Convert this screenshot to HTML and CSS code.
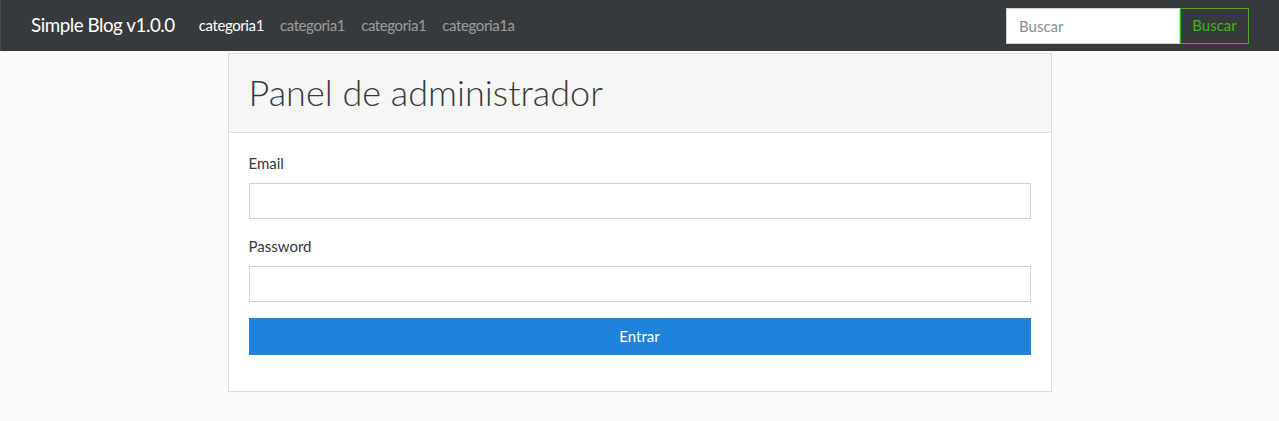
FILE: index.html
```html
<!DOCTYPE html>
<html lang="es">
<head>
<meta charset="utf-8">
<title>Simple Blog</title>
<link rel="stylesheet" href="styles.css">
</head>
<body>
<nav class="navbar">
  <a class="brand" href="#">Simple Blog v1.0.0</a>
  <ul class="nav">
    <li><a class="nav-link active" href="#">categoria1</a></li>
    <li><a class="nav-link" href="#">categoria1</a></li>
    <li><a class="nav-link" href="#">categoria1</a></li>
    <li><a class="nav-link" href="#">categoria1a</a></li>
  </ul>
  <form class="search">
    <input class="search-input" type="text" placeholder="Buscar">
    <button class="search-btn" type="button">Buscar</button>
  </form>
</nav>
<main class="main">
  <section class="card">
    <header class="card-header">
      <h1 class="card-title">Panel de administrador</h1>
    </header>
    <div class="card-body">
      <div class="field">
        <label class="label" for="email">Email</label>
        <input class="input" id="email" type="email">
      </div>
      <div class="field">
        <label class="label" for="pw">Password</label>
        <input class="input" id="pw" type="password">
      </div>
      <button class="btn-primary" type="button">Entrar</button>
    </div>
  </section>
</main>
</body>
</html>
```
FILE: styles.css
```css
* { box-sizing: border-box; }
html, body { margin: 0; padding: 0; }
body {
  background: #f8f9fa;
  color: #373a3c;
  font-family: "Source Sans Pro", Lato, "Liberation Sans", sans-serif;
  font-size: 15px;
  line-height: 1.5;
  height: 421px;
  overflow: hidden;
}
.navbar {
  height: 51px;
  background: #373a3c;
  display: flex;
  align-items: center;
  padding: 0 30px 0 30px;
  border-left: 1px solid #4a4d4f;
}
.brand {
  color: #fff;
  text-decoration: none;
  font-size: 18.75px;
  letter-spacing: -0.45px;
  margin-right: 16px;
}
.nav {
  list-style: none;
  margin: 0;
  padding: 0;
  display: flex;
  flex: 1;
}
.nav-link {
  display: block;
  padding: 8px 8px;
  color: rgba(255,255,255,0.5);
  text-decoration: none;
  font-size: 15px;
  letter-spacing: -0.4px;
}
.nav-link.active { color: #fff; }
.search { display: flex; }
.search-input {
  width: 174px;
  height: 36px;
  border: 1px solid #ced4da;
  background: #fff;
  padding: 6px 12px;
  font: inherit;
  font-size: 15px;
  margin: 0;
  outline: none;
}
.search-input::placeholder { color: #868e96; }
.search-btn {
  height: 36px;
  width: 69px;
  border: 1px solid #3fb618;
  background: transparent;
  color: #3fb618;
  font: inherit;
  font-size: 15px;
  margin: 0;
  padding: 0;
}
.main {
  display: flex;
  justify-content: center;
  padding-top: 2px;
}
.card {
  width: 824px;
  background: #fff;
  border: 1px solid #dcdcdd;
}
.card-header {
  background: #f6f6f6;
  border-bottom: 1px solid #dcdcdd;
  height: 79px;
  padding: 0 20px;
  display: flex;
  align-items: center;
}
.card-title {
  margin: 0;
  font-weight: 300;
  font-size: 36px;
  line-height: 1.2;
  color: #373a3c;
}
.card-body { padding: 19px 20px 36px; }
.field { margin-bottom: 16px; }
.label {
  display: block;
  margin-bottom: 8px;
  font-size: 15px;
  line-height: 22.5px;
}
.input {
  display: block;
  width: 100%;
  height: 36.5px;
  border: 1px solid #ced4da;
  padding: 6px 12px;
  font: inherit;
  margin: 0;
  background: #fff;
}
.btn-primary {
  display: block;
  width: 100%;
  height: 36.5px;
  background: #1f83dc;
  color: #fff;
  border: 0;
  font: inherit;
  font-size: 15px;
  margin: 0;
}
```
